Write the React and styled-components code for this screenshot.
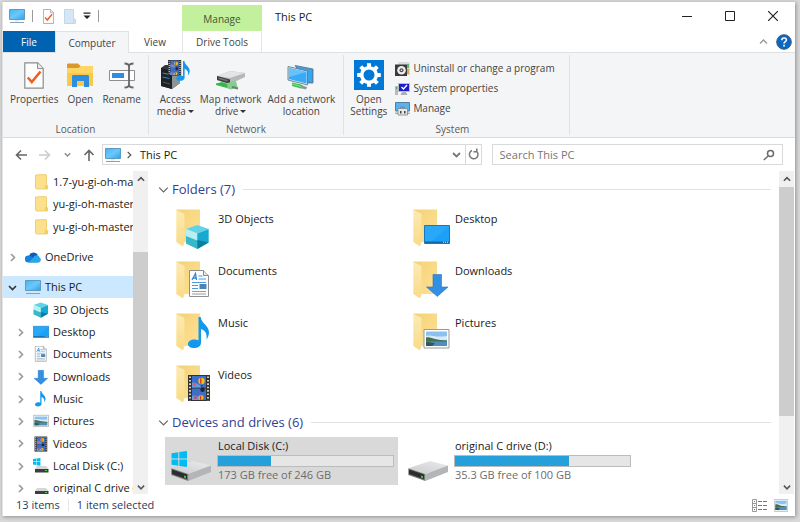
import React from "react";
import styled, { createGlobalStyle } from "styled-components";

const GlobalStyle = createGlobalStyle`
  * {
    box-sizing: border-box;
  }
  body {
    margin: 0;
    background: #d9d9d9;
    font-family: "Open Sans", "Noto Sans", sans-serif;
    font-size: 11px;
    line-height: 16px;
    color: #1a1a1a;
  }
  button, input {
    font: inherit;
    color: inherit;
    margin: 0;
    padding: 0;
    border: none;
    background: none;
  }
  ul {
    margin: 0;
    padding: 0;
    list-style: none;
  }
  svg {
    display: block;
    flex: none;
  }
`;

/* ---------- window ---------- */

const Desktop = styled.div`
  height: 100vh;
  min-height: 400px;
  padding: 2px 5px 6px 2px;
`;
const Window = styled.div`
  height: 100%;
  display: flex;
  flex-direction: column;
  background: #fff;
  border-left: 1px solid #e4e4e4;
  box-shadow: 1px 1px 4px rgba(0, 0, 0, 0.35);
`;
const TopArea = styled.header`
  display: flex;
  height: 50px;
`;
const TopLeft = styled.div`
  display: flex;
  flex-direction: column;
  justify-content: space-between;
  width: 179px;
`;
const QuickAccess = styled.div`
  display: flex;
  align-items: center;
  gap: 7px;
  height: 28px;
  padding-left: 6px;
`;
const IconButton = styled.button`
  display: flex;
`;
const QuickTool = styled(IconButton)`
  padding-left: 3px;
`;
const Divider = styled.span`
  width: 1px;
  height: 12px;
  background: ${(props) => props.$color || "#9a9a9a"};
`;
const Tabs = styled.nav`
  display: flex;
  height: 21px;
`;
const Tab = styled.button`
  width: 52px;
  font-size: 10px;
  color: #444;
`;
const FileTab = styled(Tab)`
  background: #0063b1;
  color: #fff;
`;
const ActiveTab = styled(Tab)`
  width: 74px;
  height: 22px;
  background: #f4f5f7;
  border: 1px solid #e0e1e2;
  border-bottom: none;
  position: relative;
`;
const ToolTab = styled.div`
  display: flex;
  flex-direction: column;
  width: 80px;
  padding-top: 3px;
`;
const ToolTabTitle = styled.span`
  height: 26px;
  line-height: 28px;
  text-align: center;
  font-size: 10px;
  color: #3f5634;
  background: #c2f09c;
`;
const ToolTabButton = styled(Tab)`
  width: 100%;
  height: 21px;
  border-left: 1px solid #e6e6e6;
  border-right: 1px solid #e6e6e6;
`;
const Title = styled.h1`
  flex: 1;
  margin: 0;
  padding: 7px 0 0 13px;
  font-size: 11px;
  font-weight: 400;
`;
const TopRight = styled.div`
  display: flex;
  flex-direction: column;
  justify-content: space-between;
  padding-right: 1px;
`;
const WindowButtons = styled.div`
  display: flex;
  height: 28px;
`;
const WindowButton = styled.button`
  display: flex;
  align-items: center;
  justify-content: center;
  width: 43px;
`;
const HelpRow = styled.div`
  display: flex;
  align-items: center;
  justify-content: flex-end;
  gap: 8px;
  height: 21px;
  padding-right: 2px;
`;

/* ---------- ribbon ---------- */

const Ribbon = styled.section`
  display: flex;
  height: 86px;
  background: #f4f5f7;
  border-top: 1px solid #dfe0e1;
  border-bottom: 1px solid #d9dadb;
  font-size: 10px;
  line-height: 12px;
  color: #444;
`;
const Group = styled.div`
  display: flex;
  flex-direction: column;
  justify-content: space-between;
  margin: 2px 0;
  padding: 0 ${(props) => props.$right || props.$pad}px 0 ${(props) => props.$pad}px;
  border-right: 1px solid #e1e2e3;
`;
const GroupBody = styled.div`
  display: flex;
  justify-content: center;
  gap: ${(props) => props.$gap}px;
`;
const GroupName = styled.span`
  text-align: center;
  color: #5a5a5a;
`;
const BigButton = styled.button`
  display: flex;
  flex-direction: column;
  align-items: center;
  gap: 1px;
  padding-top: 3px;
  white-space: nowrap;
`;
const IconSlot = styled.span`
  display: flex;
  align-items: center;
  justify-content: center;
  height: 34px;
`;
const SmallButtons = styled.div`
  display: flex;
  flex-direction: column;
  padding-top: 3px;
`;
const SmallButton = styled.button`
  display: flex;
  align-items: center;
  gap: 3px;
  height: 20px;
  white-space: nowrap;
`;
const Caret = styled.span`
  display: inline-block;
  margin: 0 0 2px 2px;
  border: 3px solid transparent;
  border-top-color: #333;
  border-bottom: none;
`;

/* ---------- address bar ---------- */

const AddressRow = styled.div`
  display: flex;
  align-items: center;
  height: 33px;
  padding-right: 12px;
`;
const NavButtons = styled.div`
  display: flex;
  align-items: center;
  justify-content: space-between;
  width: 99px;
  padding: 0 7px 0 12px;
`;
const AddressBox = styled.div`
  flex: 15;
  display: flex;
  align-items: center;
  height: 21px;
  padding-left: 2px;
  border: 1px solid #d9d9d9;
`;
const Crumb = styled.span`
  flex: 1;
  padding-left: 7px;
`;
const CrumbArrow = styled(IconButton)`
  padding-left: 4px;
`;
const RefreshButton = styled.button`
  display: flex;
  align-items: center;
  height: 100%;
  margin-left: 4px;
  padding: 0 1px;
  border-left: 1px solid #d9d9d9;
`;
const SearchBox = styled.label`
  flex: 11;
  display: flex;
  align-items: center;
  height: 21px;
  margin-left: 10px;
  padding: 0 7px;
  border: 1px solid #d9d9d9;
`;
const SearchInput = styled.input`
  flex: 1;
  min-width: 0;
  outline: none;
  &::placeholder {
    color: #757575;
    opacity: 1;
  }
`;

/* ---------- body ---------- */

const Body = styled.div`
  flex: 1;
  min-height: 0;
  display: flex;
  padding-right: 1px;
`;
const Sidebar = styled.aside`
  display: flex;
  width: 145px;
`;
const Tree = styled.ul`
  flex: 1;
  min-width: 0;
  overflow: hidden;
`;
const TreeItem = styled.li`
  display: flex;
  align-items: center;
  gap: 4px;
  height: 22px;
  margin-top: ${(props) => (props.$spaced ? 8 : 0)}px;
  padding-left: ${(props) => (props.$level ? 13 : 5)}px;
  white-space: nowrap;
  overflow: hidden;
  background: ${(props) => (props.$selected ? "#cce8ff" : "none")};
  &:nth-child(3n) {
    height: 23px;
  }
`;
const Twisty = styled.button`
  display: flex;
  flex: none;
  justify-content: center;
  width: 9px;
  margin-right: 4px;
`;
const TreeIcon = styled.span`
  display: flex;
  flex: none;
  justify-content: center;
  width: 16px;
`;
const ScrollTrack = styled.div`
  display: flex;
  flex-direction: column;
  flex: none;
  width: 15px;
  background: #f0f0f0;
`;
const ScrollButton = styled.button`
  display: flex;
  align-items: center;
  justify-content: center;
  height: 15px;
`;
const ScrollSpace = styled.div`
  flex: ${(props) => props.$size};
  background: ${(props) => (props.$thumb ? "#cdcdcd" : "none")};
`;
const Content = styled.main`
  flex: 1;
  min-width: 0;
  overflow: hidden;
  padding: 6px 0 0 8px;
`;
const SectionHead = styled.h2`
  display: flex;
  align-items: center;
  gap: 3px;
  height: 24px;
  margin: 0 8px 3px 2px;
  font-size: 13px;
  font-weight: 400;
  color: #2e4196;
  &::after {
    content: "";
    flex: 1;
    height: 1px;
    margin-left: 5px;
    background: #e2e2e2;
  }
`;
const Tiles = styled.div`
  display: grid;
  grid-template-columns: repeat(auto-fill, 233px);
  gap: 4px;
  margin: 0 0 2px 9px;
`;
const Tile = styled.div`
  display: flex;
  height: 48px;
  padding: 5px 0 0 5px;
  background: ${(props) => (props.$selected ? "#d9d9d9" : "none")};
`;
const TileName = styled.span`
  padding-top: 2px;
`;
const DriveInfo = styled.div`
  display: flex;
  flex-direction: column;
  width: 177px;
  margin: -4px 0 0 -1px;
`;
const DriveName = styled.span`
  padding-left: 1px;
`;
const Meter = styled.div`
  height: 12px;
  margin-top: 1px;
  border: 1px solid #bcbcbc;
  background: #e6e6e6;
`;
const MeterFill = styled.div`
  height: 100%;
  background: #26a0da;
`;
const DriveFree = styled(DriveName)`
  color: #6d6d6d;
`;
const StatusBar = styled.footer`
  display: flex;
  align-items: center;
  gap: 8px;
  height: 22px;
  padding: 0 7px 0 13px;
  color: #2c3c5c;
`;
const ViewButtons = styled.div`
  display: flex;
  gap: 6px;
  margin-left: auto;
`;

/* ---------- icons ---------- */

const Chevron = ({ dir = "right", size = 8, color = "#8a8a8a", width = 1.4 }) => {
  const d = {
    right: "M3 1 6.5 4.5 3 8",
    down: "M1 3 4.5 6.5 8 3",
    up: "M1 6.5 4.5 3 8 6.5",
  }[dir];
  return (
    <svg width={size} height={size} viewBox="0 0 9 9" fill="none" stroke={color} strokeWidth={width}>
      <path d={d} />
    </svg>
  );
};

const MonitorIcon = ({ size = 16 }) => (
  <svg width={size} height={size} viewBox="0 0 16 16">
    <defs>
      <linearGradient id="screen" x1="0" y1="0" x2="1" y2="1">
        <stop offset="0" stopColor="#45b3f6" />
        <stop offset=".5" stopColor="#6cc8fb" />
        <stop offset="1" stopColor="#2f9fe8" />
      </linearGradient>
    </defs>
    <path d="M.5 1.5h15v10H.5z" fill="url(#screen)" stroke="#5b9cc4" />
    <path d="M6 12h4v1.5H6z" fill="#dbe6ed" />
    <path d="M1 14.5h14" stroke="#8aa1b0" />
  </svg>
);

const CheckDoc = ({ w = 11, h = 15 }) => (
  <svg width={w} height={h} viewBox="0 0 20 27">
    <path d="M.8.8h13l5.4 5.6v19.8H.8z" fill="#fdfdfd" stroke="#8c8c8c" strokeWidth="1.2" />
    <path d="M13.5.8v5.8h5.7" fill="#e8e8e8" stroke="#8c8c8c" />
    <path d="M3.8 15.5 7.8 20 16.5 9.5" fill="none" stroke="#ee5f22" strokeWidth="2.6" />
  </svg>
);

const PaleFolder = () => (
  <svg width="12" height="15" viewBox="0 0 12 15">
    <path d="M.5.5h9v9l2 1v4H.5z" fill="#d6e6f5" stroke="#c3d7ea" />
    <path d="M9.500 9.500v5" stroke="#c3d7ea" />
  </svg>
);

const OpenFolder = () => (
  <svg width="28" height="28" viewBox="0 0 28 28">
    <path d="M1 4c0-1 .6-1.500 1.500-1.500H12L14.500 5H26c.7 0 1 .3 1 1v18H1z" fill="#d9982b" />
    <path d="M1 7h11.500l2.500-2H26c.6 0 1 .4 1 1v19H1z" fill="#fdc843" />
    <path d="M1 7h11.500l2.500-2H26c.6 0 1 .4 1 1v6H1z" fill="#ffd566" />
    <path d="M6 26V15.500c0-1 .5-1.500 1.500-1.500h14c1 0 1.500.5 1.500 1.500V26h-5v-6h-7v6z" fill="#2f8de0" />
  </svg>
);

const RenameIcon = () => (
  <svg width="28" height="28" viewBox="0 0 28 28">
    <path d="M1.500 9.500h25v10h-25z" fill="#fff" stroke="#8e8e8e" />
    <path d="M4 12h12v5H4z" fill="#2f8de0" />
    <path d="M21 5v19M16.500 2.500c2.500 0 4.500.5 4.500 3 0-2.500 2-3 4.500-3M16.500 26.500c2.500 0 4.500-.5 4.500-3 0 2.500 2 3 4.500 3" fill="none" stroke="#666" strokeWidth="1.8" />
  </svg>
);

const FilmArt = () => (
  <g>
    <path d="M0 0h22v26H0z" fill="#35332f" />
    <path d="M4 1h14v11.500H4zM4 13.500h14V25H4z" fill="#3b6fca" />
    <path d="M4 8c4-2 6 3 9 2v2.500H4zM4 21c4-2 6 2 9 1v3H4z" fill="#5aa0e8" />
    <circle cx="13.500" cy="6" r="3.200" fill="#f1c01f" />
    <path d="M12.500 3c-.8 2-.8 4 0 6h1V3z" fill="#d93b2b" />
    <path d="M12.500 10h2v1.500h-2z" fill="#5a341b" />
    <circle cx="6.500" cy="9.500" r="1.800" fill="#e0567c" />
    <circle cx="14.500" cy="14.800" r="2.200" fill="#23232b" />
    <circle cx="7.500" cy="22.500" r="1.600" fill="#e0445c" />
    <circle cx="13" cy="22.500" r="2.500" fill="#f1c01f" />
    <path d="M12.300 20.500c-.8 1.500-.8 3 0 4.500h1v-4.500z" fill="#da3b2c" />
    <path d="M2 1.500v24M20 1.500v24" stroke="#e4e0d8" strokeWidth="1.800" strokeDasharray="1.600 1.800" />
  </g>
);

const NoteArt = ({ color = "#1299ee" }) => (
  <path
    d="M12.500 0h2.200c.6 6.500 8.300 8.500 8.300 15.500 0 2.500-1 5-2.500 7 .8-5.500-1-9-5.500-10.500V26c0 3-3.200 5-6.800 5S2 29.500 2 27s2.800-4.500 6.200-4.500c1.800 0 3.300.3 4.300 1z"
    fill={color}
  />
);

const MediaIcon = () => (
  <svg width="30" height="30" viewBox="0 0 30 30">
    <path d="M1 8 5 5h15v18l-8 6L1 26z" fill="#33373a" />
    <path d="M12 11 20 6v17l-8 6z" fill="#8e9396" />
    <path d="M1 8 12 11v18L1 26z" fill="#1e2225" />
    <path d="M2.500 13l7 1.500M2.500 17l7 1.500" stroke="#2b87d8" strokeWidth="1.200" />
    <path d="M3 22l7 2" stroke="#555" />
    <g transform="translate(8 0) scale(.6)">
      <FilmArt />
    </g>
    <g transform="translate(15 1) scale(.64)">
      <NoteArt />
    </g>
  </svg>
);

const NetDriveIcon = () => (
  <svg width="30" height="30" viewBox="0 0 30 30">
    <path d="M1 16 14 11l15 2v4L14 24 1 20z" fill="#b5b7b9" />
    <path d="M1 16 14 11l15 2L14 18z" fill="#e3e4e5" />
    <path d="M1 16l13 3.500V24L1 20z" fill="#3b3d3f" />
    <path d="M2.500 17.500l9 2.500v1.500l-9-2.500z" fill="#777" />
    <path d="M0 23.500 6 22l11 3.500V29L11 28 0 25z" fill="#39b54a" />
    <path d="M11 23l9-2 1.500 6-6 2.500-4-1z" fill="#7fd08a" />
    <path d="M16 27l6 1.500" stroke="#777" strokeWidth="2" />
  </svg>
);

const NetPlaceIcon = () => (
  <svg width="30" height="30" viewBox="0 0 30 30">
    <path d="M9 5.500 27 9v14l-5 0z" fill="#4d95cd" stroke="#4d718d" strokeWidth=".8" />
    <path d="M10 6.500 26 10v12l-4-1z" fill="#38a5ef" />
    <path d="M2 6.500 21.500 11v14L2 20z" fill="#d5e2ea" stroke="#4d718d" strokeWidth=".8" />
    <path d="M3 8 20.500 12v11.500L3 19z" fill="#39aaf5" />
    <path d="M3 8 20.500 12 3 17z" fill="#68c2fa" />
    <path d="M6 22.500 15 24.500l3 2-3 2-9-2.500z" fill="#3fc04f" />
    <path d="M14 25l7 2-1 2.500-6-1.500z" fill="#8c9692" />
    <path d="M6 24l9 2.500" stroke="#86df8f" />
  </svg>
);

const SettingsIcon = () => (
  <svg width="30" height="30" viewBox="0 0 30 30">
    <path d="M0 0h30v30H0z" fill="#0078d7" />
    <g stroke="#fff" fill="none">
      <circle cx="15" cy="15" r="7.300" strokeWidth="3.600" />
      {[0, 45, 90, 135, 180, 225, 270, 315].map((a) => (
        <path key={a} d="M15 3.200v4.300" strokeWidth="4" transform={`rotate(${a} 15 15)`} />
      ))}
    </g>
  </svg>
);

const UninstallIcon = () => (
  <svg width="15" height="15" viewBox="0 0 15 15">
    <path d="M3 1h11l1 2v11H3z" fill="#d7dcd8" />
    <path d="M12 3h2v4h-2z" fill="#63b86a" />
    <path d="M12 8h2v5h-2z" fill="#e8a23d" />
    <path d="M0 3.500h12V15H0z" fill="#3a3a3a" />
    <circle cx="6.500" cy="9.300" r="4.300" fill="#ededed" />
    <circle cx="6.500" cy="9.300" r="2" fill="#4a4a4a" />
    <circle cx="6.500" cy="9.300" r=".8" fill="#fff" />
  </svg>
);

const SysPropIcon = () => (
  <svg width="15" height="15" viewBox="0 0 15 15">
    <path d="M0 5h3v9H0z" fill="#b7bbb7" />
    <path d="M1 6h1v2H1z" fill="#4aa84a" />
    <path d="M3.500 2.500h11v8h-11z" fill="#1c1cc9" stroke="#b9c0c8" />
    <path d="M6.500 6l2 2L12 4" fill="none" stroke="#fff" strokeWidth="1.400" />
    <path d="M7 11h4l1.500 3h-7z" fill="#aab0b6" />
  </svg>
);

const ManageIcon = () => (
  <svg width="15" height="15" viewBox="0 0 15 15">
    <path d="M.5 1.500h14v8.500H.5z" fill="#55b4f2" stroke="#527f9e" />
    <path d="M0 11.500h15v1.500H0z" fill="#a9b5bd" />
    <path d="M5.500 6h4v2h-4z" fill="none" stroke="#7d858c" />
    <path d="M3 7.500h9.500V14H3z" fill="#e5e8ea" stroke="#7d858c" strokeWidth=".8" />
    <path d="M5 10h1.500v2.500H5zM9 10h1.500v2.500H9z" fill="#3d4246" />
  </svg>
);

const SmallFolder = () => (
  <svg width="13" height="16" viewBox="0 0 13 16">
    <path d="M.5 1 10.500.5 11.500 1v10l1 1v3H1.500l-1-1z" fill="#fbe08d" stroke="#eac65f" strokeWidth=".8" />
    <path d="M10 11h2.500v4H9.500z" fill="#f5ce5f" />
  </svg>
);

const CloudIcon = () => (
  <svg width="16" height="12" viewBox="0 0 16 12">
    <path d="M4 4.500A5 5 0 0 1 13 4l-5 4z" fill="#0f5cb8" />
    <path d="M3.500 11.500a3.500 3.500 0 0 1-.3-7c3 0 4.500 2 9.800 7z" fill="#1483dc" />
    <path d="M8 7c1.500-3.500 6-3.500 6.500-.5 2 .8 1.800 5-1 5H3.500z" fill="#28a8ea" />
  </svg>
);

const CubeArt = () => (
  <g>
    <path d="M11.300 0 22.700 4 11.300 8.500 0 4z" fill="#62d3e6" />
    <path d="M0 4 11.300 8.500V24L0 18.500z" fill="#b7f0f4" />
    <path d="M0 11 11.300 15.500V24L0 18.500z" fill="#36b9c9" />
    <path d="M11.300 8.500 22.700 4v13.500L11.300 24z" fill="#17a9d0" />
    <path d="M11.300 15 22.700 17.500 11.300 24z" fill="#0b7fa3" />
  </g>
);

const ScreenArt = () => (
  <g>
    <path d="M.5.500h25v18H.5z" fill="#1ba1f7" stroke="#1878ba" />
    <path d="M1 1h24L8 16H1z" fill="#38b0fb" opacity=".5" />
    <path d="M1 16.500h24v1.500H1z" fill="#1469a6" />
    <path d="M19 17.200h5" stroke="#d9eefc" strokeDasharray="1 1" />
  </g>
);

const PageArt = () => (
  <g>
    <path d="M.5.500h14l5 5v21H.5z" fill="#fdfdfd" stroke="#8e8e8e" />
    <path d="M14.500.500v5h5" fill="#e4e4e4" stroke="#8e8e8e" />
    <path d="M3 10 6.500 3.500 7.500 10M4.500 8h3" fill="none" stroke="#2d86d0" strokeWidth="1.300" />
    <path d="M9.500 6h4M9.500 9h7.500M3 12.500h14M3 15.500h6M3 18.500h6" stroke="#4d9ad8" />
    <path d="M10.500 14h7v5h-7z" fill="#4b86b8" />
    <path d="M3 21.500h14M3 24h14" stroke="#9a9a9a" />
  </g>
);

const ArrowArt = () => <path d="M6.500.500h8.500V13h6.500L10.800 22.500 0 13h6.500z" fill="#338fe2" stroke="#2577c0" strokeWidth=".6" />;

const PhotoArt = () => (
  <g>
    <path d="M.5.500h25v18.500H.5z" fill="#fff" stroke="#999" />
    <path d="M2.500 2.500h21v14.500h-21z" fill="#8cc0f0" />
    <path d="M2.500 7c5-2 8 2 21 0v4h-21z" fill="#d8eafa" />
    <path d="M2.500 8.500c3-1 6 .5 9 1.500s7 1 12 1.500V13h-21z" fill="#44704e" />
    <path d="M2.500 12.500h21V17h-21z" fill="#4f8fbe" />
    <path d="M2.500 13c4 0 6 .5 9 1.500l-3 2.500h-6z" fill="#2f5a58" />
  </g>
);

const WinLogoArt = () => (
  <path d="M0 2.200 6.800 1.200V7.500H0zM7.800 1 15.500 0v7.500H7.800zM0 8.500h6.800v6.300L0 13.800zM7.800 8.500h7.700V16L7.800 15z" fill="#00bcf2" />
);

const DriveArt = () => (
  <g>
    <defs>
      <linearGradient id="driveTop" x1="0" y1="1" x2="1" y2="0">
        <stop offset="0" stopColor="#c9cacc" />
        <stop offset="1" stopColor="#ececee" />
      </linearGradient>
    </defs>
    <path d="M.3 18.300 22 11l18 4.500L17.300 24z" fill="url(#driveTop)" />
    <path d="M17.300 24 40 15.500V22L17.300 31z" fill="#b4b5b8" />
    <path d="M.3 18.300 17.300 24v7L.3 25z" fill="#77797b" />
    <path d="M1 19.500 16 24.600v4.700L1 24z" fill="#2b2d2e" />
    <path d="M13 25.500l2 .7v2l-2-.7z" fill="#3ed13e" />
  </g>
);

// big: x, y on the folder; small: x, y, scale of the 16px version
const artwork = {
  cube: { Art: CubeArt, big: [10, 16], small: [0.5, 0.5, 0.64] },
  desktop: { Art: ScreenArt, big: [11, 16], small: [0, 2, 0.62] },
  documents: { Art: PageArt, big: [13, 9], small: [2, 0, 0.58] },
  downloads: { Art: ArrowArt, big: [13.5, 13], small: [1, 1, 0.64] },
  music: { Art: NoteArt, big: [10, 4], small: [1, 0, 0.5] },
  pictures: { Art: PhotoArt, big: [10.5, 16], small: [0, 2, 0.61] },
  videos: { Art: FilmArt, big: [12, 10], small: [1.5, 0.5, 0.58] },
};

const FolderIcon = ({ kind }) => {
  const { Art, big } = artwork[kind];
  return (
    <svg width="48" height="40" viewBox="0 0 48 40">
      <defs>
        <linearGradient id="folderBack" x1="0" y1="0" x2="1" y2="1">
          <stop offset="0" stopColor="#f3d274" />
          <stop offset="1" stopColor="#ffe197" />
        </linearGradient>
        <linearGradient id="folderFlap" x1="0" y1="0" x2="0" y2="1">
          <stop offset="0" stopColor="#fdeab4" />
          <stop offset="1" stopColor="#fadb85" />
        </linearGradient>
      </defs>
      <g transform="translate(6 0)">
        <path d="M.5.500H24V33H8z" fill="url(#folderBack)" />
        <path d="M.3.800 8.500 5v28l-1.500 4.500L.3 33z" fill="url(#folderFlap)" />
        <g transform={`translate(${big[0]} ${big[1]})`}>
          <Art />
        </g>
      </g>
    </svg>
  );
};

const DriveIcon = ({ system }) => (
  <svg width="48" height="40" viewBox="0 0 48 40">
    <g transform="translate(1 8)">
      <DriveArt />
      {system && (
        <g transform="translate(.5 1)">
          <WinLogoArt />
        </g>
      )}
    </g>
  </svg>
);

const SmallIcon = ({ kind }) => {
  if (kind === "folder") return <SmallFolder />;
  if (kind === "cloud") return <CloudIcon />;
  if (kind === "pc") return <MonitorIcon />;
  if (kind === "drive" || kind === "system") {
    return (
      <svg width="16" height="16" viewBox="0 0 16 16">
        <path d="M4 8h9l2.500 3H2z" fill="#d4d6d8" />
        <path d="M2 11h13.500v3.500H2z" fill="#3b3d3f" />
        <path d="M12 12.500h2" stroke="#3ed13e" />
        {kind === "system" && (
          <g transform="scale(.48)">
            <WinLogoArt />
          </g>
        )}
      </svg>
    );
  }
  const { Art, small } = artwork[kind];
  return (
    <svg width="16" height="16" viewBox="0 0 16 16">
      <g transform={`translate(${small[0]} ${small[1]}) scale(${small[2]})`}>
        <Art />
      </g>
    </svg>
  );
};

const ArrowIcon = ({ dir, color = "#666" }) => {
  const d = {
    left: "M12 6H1.500M6 1.500 1.500 6 6 10.500",
    right: "M0 6h10.500M6 1.500 10.500 6 6 10.500",
    up: "M6 12V1.500M1.500 6 6 1.500 10.500 6",
  }[dir];
  return (
    <svg width="12" height="12" viewBox="0 0 12 12" fill="none" stroke={color} strokeWidth="1.600">
      <path d={d} />
    </svg>
  );
};

const RefreshIcon = () => (
  <svg width="13" height="13" viewBox="0 0 13 13" fill="none" stroke="#777" strokeWidth="1.500">
    <path d="M9.500 3.200A4.300 4.300 0 1 1 5 2.500M9.800 .5v3.200H6.500" />
  </svg>
);

const SearchIcon = () => (
  <svg width="12" height="12" viewBox="0 0 12 12" fill="none" stroke="#6a6a6a" strokeWidth="1.500">
    <circle cx="7.500" cy="4.500" r="3" />
    <path d="M5.300 6.700.8 11" />
  </svg>
);

const HelpIcon = () => (
  <svg width="16" height="16" viewBox="0 0 16 16">
    <circle cx="8" cy="8" r="7.300" fill="#0a68c4" stroke="#3d5c80" />
    <path d="M5.800 6.200c0-3 4.600-2.800 4.600-.3C10.400 7.500 8 7.600 8 9.600" fill="none" stroke="#fff" strokeWidth="1.600" />
    <path d="M7.200 10.800h1.700v1.600H7.200z" fill="#fff" />
  </svg>
);

/* ---------- data ---------- */

const treeItems = [
  { name: "1.7-yu-gi-oh-master", icon: "folder", level: 1, leaf: true },
  { name: "yu-gi-oh-master", icon: "folder", level: 1, leaf: true },
  { name: "yu-gi-oh-master", icon: "folder", level: 1, leaf: true },
  { name: "OneDrive", icon: "cloud", spaced: true },
  { name: "This PC", icon: "pc", spaced: true, selected: true },
  { name: "3D Objects", icon: "cube", level: 1, leaf: true },
  { name: "Desktop", icon: "desktop", level: 1 },
  { name: "Documents", icon: "documents", level: 1 },
  { name: "Downloads", icon: "downloads", level: 1 },
  { name: "Music", icon: "music", level: 1 },
  { name: "Pictures", icon: "pictures", level: 1 },
  { name: "Videos", icon: "videos", level: 1 },
  { name: "Local Disk (C:)", icon: "system", level: 1 },
  { name: "original C drive (D:)", icon: "drive", level: 1 },
];

const folders = [
  ["3D Objects", "cube"],
  ["Desktop", "desktop"],
  ["Documents", "documents"],
  ["Downloads", "downloads"],
  ["Music", "music"],
  ["Pictures", "pictures"],
  ["Videos", "videos"],
];

const drives = [
  { name: "Local Disk (C:)", free: "173 GB free of 246 GB", used: 30, system: true },
  { name: "original C drive (D:)", free: "35.3 GB free of 100 GB", used: 65 },
];

const Scrollbar = ({ before, thumb, after }) => (
  <ScrollTrack>
    <ScrollButton aria-label="Scroll up">
      <Chevron dir="up" color="#555" width={1.8} />
    </ScrollButton>
    <ScrollSpace $size={before} />
    <ScrollSpace $size={thumb} $thumb />
    <ScrollSpace $size={after} />
    <ScrollButton aria-label="Scroll down">
      <Chevron dir="down" color="#555" width={1.8} />
    </ScrollButton>
  </ScrollTrack>
);

export default function App() {
  return (
    <Desktop>
      <GlobalStyle />
      <Window>
        <TopArea>
          <TopLeft>
            <QuickAccess>
              <MonitorIcon />
              <Divider />
              <QuickTool aria-label="Properties"><CheckDoc /></QuickTool>
              <QuickTool aria-label="New folder"><PaleFolder /></QuickTool>
              <IconButton aria-label="Customize toolbar">
                <svg width="8" height="8" viewBox="0 0 8 8">
                  <path d="M.5.500h7v1.300h-7zM.5 3.500h7L4 7z" fill="#222" />
                </svg>
              </IconButton>
              <Divider />
            </QuickAccess>
            <Tabs>
              <FileTab>File</FileTab>
              <ActiveTab>Computer</ActiveTab>
              <Tab>View</Tab>
            </Tabs>
          </TopLeft>
          <ToolTab>
            <ToolTabTitle>Manage</ToolTabTitle>
            <ToolTabButton>Drive Tools</ToolTabButton>
          </ToolTab>
          <Title>This PC</Title>
          <TopRight>
            <WindowButtons>
              <WindowButton aria-label="Minimize">
                <svg width="10" height="10" viewBox="0 0 10 10"><path d="M0 5.500h10" stroke="#222" /></svg>
              </WindowButton>
              <WindowButton aria-label="Maximize">
                <svg width="10" height="10" viewBox="0 0 10 10"><path d="M.5.500h9v9h-9z" fill="none" stroke="#222" /></svg>
              </WindowButton>
              <WindowButton aria-label="Close">
                <svg width="10" height="10" viewBox="0 0 10 10"><path d="M0 0 10 10M10 0 0 10" stroke="#222" strokeWidth="1.200" /></svg>
              </WindowButton>
            </WindowButtons>
            <HelpRow>
              <IconButton aria-label="Collapse ribbon"><Chevron dir="up" size={9} color="#999" /></IconButton>
              <IconButton aria-label="Help"><HelpIcon /></IconButton>
            </HelpRow>
          </TopRight>
        </TopArea>

        <Ribbon>
          <Group $pad={7}>
            <GroupBody $gap={8}>
              <BigButton><IconSlot><CheckDoc w={20} h={27} /></IconSlot>Properties</BigButton>
              <BigButton><IconSlot><OpenFolder /></IconSlot>Open</BigButton>
              <BigButton><IconSlot><RenameIcon /></IconSlot>Rename</BigButton>
            </GroupBody>
            <GroupName>Location</GroupName>
          </Group>
          <Group $pad={8}>
            <GroupBody $gap={6}>
              <BigButton>
                <IconSlot><MediaIcon /></IconSlot>
                <span>Access<br />media<Caret /></span>
              </BigButton>
              <BigButton>
                <IconSlot><NetDriveIcon /></IconSlot>
                <span>Map network<br />drive<Caret /></span>
              </BigButton>
              <BigButton>
                <IconSlot><NetPlaceIcon /></IconSlot>
                <span>Add a network<br />location</span>
              </BigButton>
            </GroupBody>
            <GroupName>Network</GroupName>
          </Group>
          <Group $pad={6} $right={14}>
            <GroupBody $gap={8}>
              <BigButton>
                <IconSlot><SettingsIcon /></IconSlot>
                <span>Open<br />Settings</span>
              </BigButton>
              <SmallButtons>
                <SmallButton><UninstallIcon />Uninstall or change a program</SmallButton>
                <SmallButton><SysPropIcon />System properties</SmallButton>
                <SmallButton><ManageIcon />Manage</SmallButton>
              </SmallButtons>
            </GroupBody>
            <GroupName>System</GroupName>
          </Group>
        </Ribbon>

        <AddressRow>
          <NavButtons>
            <IconButton aria-label="Back"><ArrowIcon dir="left" /></IconButton>
            <IconButton aria-label="Forward"><ArrowIcon dir="right" color="#ccc" /></IconButton>
            <IconButton aria-label="Recent locations"><Chevron dir="down" size={7} width={1.8} /></IconButton>
            <IconButton aria-label="Up"><ArrowIcon dir="up" /></IconButton>
          </NavButtons>
          <AddressBox>
            <MonitorIcon />
            <CrumbArrow aria-label="Expand path"><Chevron color="#555" /></CrumbArrow>
            <Crumb>This PC</Crumb>
            <Chevron dir="down" size={9} color="#777" width={1.8} />
            <RefreshButton aria-label="Refresh"><RefreshIcon /></RefreshButton>
          </AddressBox>
          <SearchBox>
            <SearchInput type="text" placeholder="Search This PC" aria-label="Search This PC" />
            <SearchIcon />
          </SearchBox>
        </AddressRow>

        <Body>
          <Sidebar>
            <Tree>
              {treeItems.map((item, i) => (
                <TreeItem key={i} $level={item.level} $spaced={item.spaced} $selected={item.selected}>
                  <Twisty aria-label={`Toggle ${item.name}`}>
                    {!item.leaf && (
                      <Chevron
                        dir={item.selected ? "down" : "right"}
                        size={9}
                        color={item.selected ? "#333" : "#999"}
                        width={1.6}
                      />
                    )}
                  </Twisty>
                  <TreeIcon><SmallIcon kind={item.icon} /></TreeIcon>
                  {item.name}
                </TreeItem>
              ))}
            </Tree>
            <Scrollbar before={66} thumb={148} after={79} />
          </Sidebar>
          <Content>
            <SectionHead><Chevron dir="down" size={11} width={1} color="#666" />Folders (7)</SectionHead>
            <Tiles>
              {folders.map(([name, kind]) => (
                <Tile key={name}>
                  <FolderIcon kind={kind} />
                  <TileName>{name}</TileName>
                </Tile>
              ))}
            </Tiles>
            <SectionHead><Chevron dir="down" size={11} width={1} color="#666" />Devices and drives (6)</SectionHead>
            <Tiles>
              {drives.map((drive) => (
                <Tile key={drive.name} $selected={drive.system}>
                  <DriveIcon system={drive.system} />
                  <DriveInfo>
                    <DriveName>{drive.name}</DriveName>
                    <Meter role="progressbar" aria-label={drive.name} aria-valuenow={drive.used}>
                      <MeterFill style={{ width: `${drive.used}%` }} />
                    </Meter>
                    <DriveFree>{drive.free}</DriveFree>
                  </DriveInfo>
                </Tile>
              ))}
            </Tiles>
          </Content>
          <Scrollbar before={1} thumb={229} after={63} />
        </Body>

        <StatusBar>
          <span>13 items</span>
          <Divider $color="#e6e6e6" />
          <span>1 item selected</span>
          <ViewButtons>
            <IconButton aria-label="Details view">
              <svg width="16" height="13" viewBox="0 0 16 13">
                <path d="M.5.500h4v12h-4zM.5 4.500h4M.5 8.500h4" fill="#fff" stroke="#999" />
                <path d="M2 2.500h1" stroke="#5a9e5a" />
                <path d="M2 6.500h1" stroke="#3d7fd0" />
                <path d="M2 10.500h1" stroke="#d04040" />
                <path d="M6 2.500h4M11 2.500h4M6 6.500h4M11 6.500h4M6 10.500h4M11 10.500h4" stroke="#777" />
              </svg>
            </IconButton>
            <IconButton aria-label="Large icons view">
              <svg width="14" height="13" viewBox="0 0 26 20" preserveAspectRatio="none"><PhotoArt /></svg>
            </IconButton>
          </ViewButtons>
        </StatusBar>
      </Window>
    </Desktop>
  );
}
